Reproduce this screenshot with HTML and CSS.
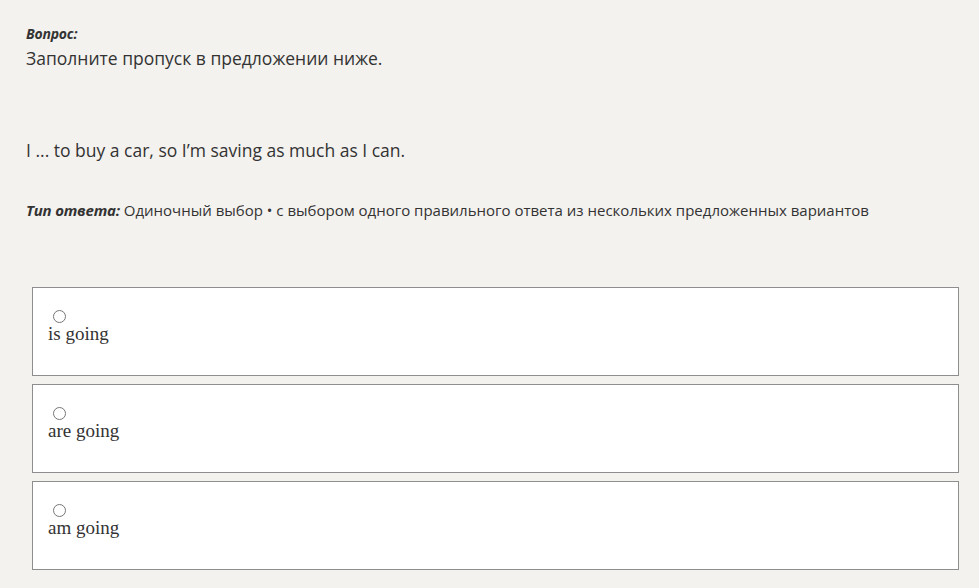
FILE: index.html
```html
<!DOCTYPE html>
<html lang="ru">
<head>
    <meta charset="UTF-8">
    <meta name="viewport" content="width=device-width, initial-scale=1.0">
    <title>Вопрос</title>
    <link rel="stylesheet" href="styles.css">
</head>
<body>
    <div class="question">
        <div class="label">Вопрос:</div>
        <p class="prompt">Заполните пропуск в предложении ниже.</p>
        <p class="sentence">I ... to buy a car, so I’m saving as much as I can.</p>
        <p class="type"><span class="label">Тип ответа:</span> Одиночный выбор • с выбором одного правильного ответа из нескольких предложенных вариантов</p>
    </div>

    <div class="options">
        <label class="option">
            <input type="radio" name="answer" value="1">
            is going
        </label>
        <label class="option">
            <input type="radio" name="answer" value="2">
            are going
        </label>
        <label class="option">
            <input type="radio" name="answer" value="3">
            am going
        </label>
    </div>
</body>
</html>
```

FILE: styles.css
```css
body {
    margin: 0;
    padding: 24px 20px 0 26px;
    background-color: #f3f2ef;
    color: #333;
    font-family: "Open Sans", "Noto Sans", sans-serif;
}
.question {
    margin-bottom: 67px;
}
.label {
    font-weight: bold;
    font-style: italic;
    font-size: 14px;
    letter-spacing: -0.2px;
}
.prompt {
    margin: 3px 0 0;
    font-size: 17.5px;
}
.sentence {
    margin: 68px 0 0;
    font-size: 17.5px;
}
.type {
    margin: 38px 0 0;
    font-size: 15px;
}
.type .label {
    font-size: 15px;
}
.options {
    margin-left: 6px;
    display: flex;
    flex-direction: column;
    gap: 8px;
}
.option {
    display: block;
    height: 65px;
    padding: 22px 15px 0;
    background: #fff;
    border: 1px solid #8e8e8e;
    font-family: "Liberation Serif", serif;
    font-size: 19px;
    line-height: 22px;
    color: #333;
}
.option input {
    display: block;
    margin: 0 0 0 5px;
    width: 13px;
    height: 13px;
}
```
